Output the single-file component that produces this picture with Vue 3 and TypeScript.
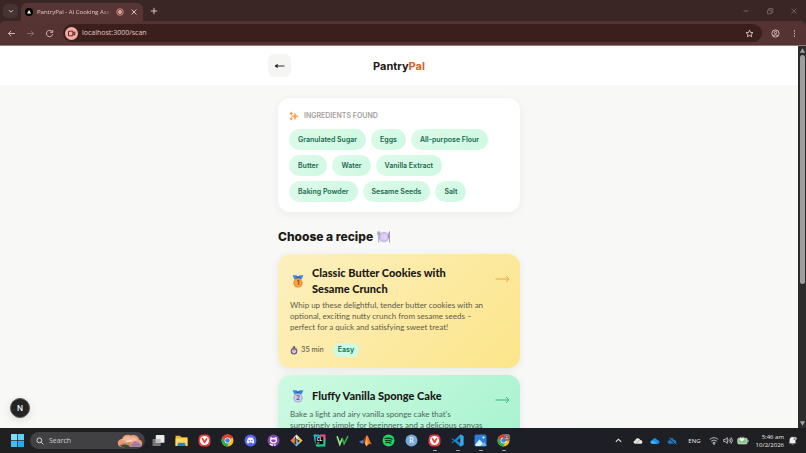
<script setup lang="ts">
import { ref } from 'vue'

interface Recipe {
  place: number
  tone: 'gold' | 'mint'
  title: string[]
  description: string[]
  time?: string
  level?: string
}

interface AppIcon {
  name: string
  art: string
  running?: boolean
}

const address = ref('localhost:3000/scan')
const query = ref('')

const ingredients: string[] = [
  'Granulated Sugar', 'Eggs', 'All-purpose Flour',
  'Butter', 'Water', 'Vanilla Extract',
  'Baking Powder', 'Sesame Seeds', 'Salt',
]

const recipes: Recipe[] = [
  {
    place: 1,
    tone: 'gold',
    title: ['Classic Butter Cookies with', 'Sesame Crunch'],
    description: [
      'Whip up these delightful, tender butter cookies with an',
      'optional, exciting nutty crunch from sesame seeds –',
      'perfect for a quick and satisfying sweet treat!',
    ],
    time: '35 min',
    level: 'Easy',
  },
  {
    place: 2,
    tone: 'mint',
    title: ['Fluffy Vanilla Sponge Cake'],
    description: [
      "Bake a light and airy vanilla sponge cake that's",
      'surprisingly simple for beginners and a delicious canvas',
    ],
  },
]

const chrome =
  '<circle cx="12" cy="12" r="11" fill="#fbc116"/><path d="M12 12 2.5 6.5A11 11 0 0 1 21.5 6.5Z" fill="#e33b2e"/><path d="M2.5 6.5A11 11 0 0 0 11 23L16.5 14.5 12 12Z" fill="#2da94f"/><path d="M12 7H21.8A11 11 0 0 0 2.5 6.5L7.5 14Z" fill="#e33b2e"/><circle cx="12" cy="12" r="5.4" fill="#fff"/><circle cx="12" cy="12" r="4.2" fill="#3e82f1"/>'
const vivaldi =
  '<rect x="1" y="1" width="22" height="22" rx="8" fill="#e8413f"/><circle cx="12" cy="12" r="8.4" fill="#fff"/><path d="M8.2 8.6 12 15.6 15.8 9" fill="none" stroke="#e8413f" stroke-width="3.2" stroke-linecap="round" stroke-linejoin="round"/>'

const apps: AppIcon[] = [
  { name: 'Task view', art: '<rect x="1" y="9" width="15" height="13" rx="1" fill="#777"/><rect x="7" y="2" width="16" height="14" rx="1" fill="#ececec"/><rect x="7" y="9" width="9" height="7" fill="#bdbdbd"/>' },
  { name: 'File Explorer', art: '<path d="M1 3h8l3 3h11v16H1Z" fill="#f0b12d"/><path d="M1 8h22v14H1Z" fill="#ffd75e"/><path d="M6 16h12l2 6H4Z" fill="#1987c9"/>' },
  { name: 'Vivaldi', art: vivaldi },
  { name: 'Chrome', art: chrome },
  { name: 'Discord', art: '<circle cx="12" cy="12" r="11" fill="#5865f2"/><path d="M8 7c2.600-1 5.400-1 8 0 2 3 3 6 2.600 9-1 .8-2 1.200-3 1.500l-1.200-1.700h-4.800l-1.200 1.700c-1-.3-2-.7-3-1.500C5 13 6 10 8 7Z" fill="#fff"/><circle cx="9.500" cy="12.500" r="1.500" fill="#5865f2"/><circle cx="14.500" cy="12.500" r="1.500" fill="#5865f2"/>' },
  { name: 'GitHub Desktop', art: '<circle cx="12" cy="12" r="11" fill="#8442b4"/><path d="M9.500 22v-4M14.500 22v-4M9.500 20c-2.500.5-3-1-4-2" fill="none" stroke="#fff" stroke-width="2"/><path d="M6.500 5.500c1.500 0 2.500.8 3 1.200h5c.5-.4 1.500-1.200 3-1.200.4 1 .5 2 .2 3 2 3 1.300 9-5.700 9s-7.700-6-5.700-9c-.3-1-.2-2 .2-3Z" fill="#fff"/><path d="M9 10h6c2 0 2 5-3 5s-5-5-3-5Z" fill="#8442b4"/>' },
  { name: 'Git Bash', art: '<path d="M12 .8 17.500 6.300 12 12 6.500 6.300Z" fill="#f0e6c8"/><path d="M17.500 6.300 23.200 12 17.500 17.700 12 12Z" fill="#efc94c"/><path d="M6.500 6.300 12 12 6.500 17.700.8 12Z" fill="#ef7a4c"/><path d="M12 12 17.500 17.700 12 23.200 6.500 17.700Z" fill="#76b6df"/><path d="M10 5v12M10 8l6 5" fill="none" stroke="#2a2f3a" stroke-width="1.600"/><circle cx="10" cy="17" r="1.800" fill="#2a2f3a"/><circle cx="16" cy="13" r="1.800" fill="#2a2f3a"/>' },
  { name: 'CLion', art: '<path d="M1 2h13l9 5v7L12 23H6Z" fill="#21d789"/><path d="M1 1h10v11l-7 5Z" fill="#22b8d6"/><path d="M13 1h10v11l-9-3Z" fill="#ef4b8e"/><path d="M12 14h11v9H8Z" fill="#1fc98c"/><rect x="5" y="5" width="14" height="14" fill="#090909"/><text x="7" y="13" font-size="8" font-weight="700" fill="#fff" font-family="Open Sans">CL</text><path d="M7 16.500h5" stroke="#fff" stroke-width="1.300"/>' },
  { name: 'Wondershare', art: '<path d="M2 4 7 19 11.500 8" fill="none" stroke="#9be28a" stroke-width="3"/><path d="M11 7 15 18 22 4" fill="none" stroke="#2fae49" stroke-width="3"/>' },
  { name: 'MATLAB', art: '<path d="M0 14 7 11 10 16 5 18Z" fill="#3f83c6"/><path d="M7 11C10 10 12 4 14.500 2L12 19 10 16Z" fill="#a83220"/><path d="M14.500 2C18 5 20 15 24 20c-4-4-6-1-10 3l-3-5Z" fill="#ec7a24"/><path d="M14.500 2 16 18l-2 5-3-5Z" fill="#f6b15a"/>' },
  { name: 'Spotify', art: '<circle cx="12" cy="12" r="11" fill="#1ed760"/><path d="M5.500 8.500c4.500-1.500 9.500-1 13.300 1.100M6.200 12.300c4-1.200 8-.7 11.300 1.200M7 16c3.300-.9 6.500-.5 9.200 1" fill="none" stroke="#10251a" stroke-width="2" stroke-linecap="round"/>' },
  { name: 'RStudio', art: '<circle cx="12" cy="12" r="11" fill="#75aadb"/><text x="12" y="17" text-anchor="middle" font-size="14" fill="#fff" font-family="Liberation Serif">R</text>' },
  { name: 'Vivaldi window', art: vivaldi, running: true },
  { name: 'Visual Studio Code', art: '<path d="M17 1 6.500 11 2.500 8 1 9l4 3.500L1 16l1.500 1 4-3L17 23l6-2.700V3.700Z" fill="#1e86cf"/><path d="M17 1v22l6-2.700V3.700Z" fill="#35a9ef"/><path d="M17 7.500v9L11 12Z" fill="#1d2230"/>', running: true },
  { name: 'Photos', art: '<rect x="1" y="1" width="22" height="22" rx="3" fill="#2b7fd6"/><path d="M2 20 10 10l11 12H3Z" fill="#d9efff"/><path d="M12 22 18 15l5 5v2Z" fill="#62b9f5"/><circle cx="17.500" cy="6.500" r="2" fill="#fff"/>', running: true },
  { name: 'Chrome window', art: chrome + '<circle cx="18" cy="6" r="6.500" fill="#6d5654"/><circle cx="18" cy="6" r="5" fill="none" stroke="#bfa39f"/><circle cx="18" cy="4.800" r="1.600" fill="#d6bcb8"/><path d="M15 9c1-2.500 5-2.500 6 0" fill="#d6bcb8"/>', running: true },
]
</script>

<template>
  <div class="desktop">
    <header class="browser">
      <div class="tabs">
        <button class="tab-search" aria-label="Search tabs">
          <svg viewBox="0 0 10 10"><path d="M2.500 4 5 6.500 7.500 4" /></svg>
        </button>
        <div class="tab">
          <svg class="favicon" viewBox="0 0 16 16"><circle cx="8" cy="8" r="8" /><path d="M8 4 12 11H4Z" /></svg>
          <span class="tab-title">PantryPal - AI Cooking Assi</span>
          <svg class="recording" viewBox="0 0 16 16"><circle cx="8" cy="8" r="6.500" /><circle class="dot" cx="8" cy="8" r="3.800" /></svg>
          <button class="tab-close" aria-label="Close tab"><svg viewBox="0 0 10 10"><path d="M2 2 8 8M8 2 2 8" /></svg></button>
        </div>
        <button class="new-tab" aria-label="New tab"><svg viewBox="0 0 10 10"><path d="M5 1V9M1 5H9" /></svg></button>
        <div class="window-buttons">
          <button aria-label="Minimize"><svg viewBox="0 0 10 10"><path d="M2 5H8" /></svg></button>
          <button aria-label="Restore"><svg viewBox="0 0 10 10"><path d="M2 4H6.500V8.500H2ZM3.500 4V2H8.500V7H6.500" /></svg></button>
          <button aria-label="Close"><svg viewBox="0 0 10 10"><path d="M2 2 8 8M8 2 2 8" /></svg></button>
        </div>
      </div>
      <div class="toolbar">
        <button aria-label="Back"><svg viewBox="0 0 12 12"><path d="M10.500 6H2M5.500 2.500 2 6 5.500 9.500" /></svg></button>
        <button class="dim" aria-label="Forward"><svg viewBox="0 0 12 12"><path d="M1.500 6H10M6.500 2.500 10 6 6.500 9.500" /></svg></button>
        <button aria-label="Reload"><svg viewBox="0 0 12 12"><path d="M9.500 3.600A4.200 4.200 0 1 0 10.200 7M10.300 1.500V4.500H7.200" /></svg></button>
        <div class="address">
          <svg class="camera" viewBox="0 0 16 16"><circle cx="8" cy="8" r="8" /><path d="M4.300 5.200H9.700V10.800H4.300ZM9.700 7.500 12 6V10L9.700 8.500" /></svg>
          <input v-model="address" aria-label="Address" type="text" />
          <button aria-label="Bookmark"><svg viewBox="0 0 12 12"><path d="M6 1.500 7.300 4.600 10.700 4.900 8.100 7.100 8.900 10.400 6 8.600 3.100 10.400 3.900 7.100 1.300 4.900 4.700 4.600Z" /></svg></button>
        </div>
        <button class="profile" aria-label="Profile"><svg viewBox="0 0 12 12"><circle cx="6" cy="6" r="4.800" /><circle cx="6" cy="4.700" r="1.600" /><path d="M2.800 9.300C4 7.300 8 7.300 9.200 9.300" /></svg></button>
        <button class="menu" aria-label="Menu"><svg viewBox="0 0 12 12"><path d="M6 1.500V3.500M6 5V7M6 8.500V10.500" /></svg></button>
      </div>
    </header>

    <div class="viewport">
      <div class="page">
        <div class="app-bar">
          <div class="app-bar-inner">
            <button class="back" aria-label="Go back"><svg viewBox="0 0 12 8"><path d="M11.500 4H2" /><path class="head" d="M4 1.500V6.500L.5 4Z" /></svg></button>
            <div class="brand">Pantry<span>Pal</span></div>
          </div>
        </div>

        <main>
          <section class="found">
            <h3>
              <svg viewBox="0 0 16 16">
                <path fill="#f9a94e" d="M9.500 2 11.300 6.700 16 8.500 11.300 10.300 9.500 15 7.700 10.300 3 8.500 7.700 6.700Z" />
                <path fill="#f28a45" d="M3.500.5 4.500 3 7 4 4.500 5 3.500 7.500 2.500 5 0 4 2.500 3ZM3.500 9.500 4.400 11.600 6.500 12.500 4.400 13.400 3.500 15.500 2.600 13.400.5 12.500 2.600 11.600Z" />
              </svg>
              Ingredients found
            </h3>
            <ul>
              <li v-for="item in ingredients" :key="item">{{ item }}</li>
            </ul>
          </section>

          <h2>
            Choose a recipe
            <svg viewBox="0 0 28 24">
              <circle cx="14" cy="12" r="10.500" fill="#cdb9ea" /><circle cx="14" cy="12" r="6.500" fill="#decff4" />
              <path d="M3.500 10V23M1.500 1V7.500Q3.500 11 5.500 7.500V1M3.500 1V8M25 23V1Q22.500 4 23 13H25" fill="none" stroke="#9384aa" stroke-width="1.600" />
            </svg>
          </h2>

          <a v-for="recipe in recipes" :key="recipe.place" href="#" class="recipe" :class="recipe.tone">
            <div class="recipe-body">
              <div class="recipe-head">
                <svg class="medal" viewBox="0 0 16 18">
                  <path d="M1 1.500H6L8 4 10 1.500H15L12.500 7H3.500Z" fill="#3f86e8" /><path d="M6 3H10V7H6Z" fill="#2463bd" />
                  <circle cx="8" cy="11.500" r="6" class="medal-rim" /><circle cx="8" cy="11.500" r="4.600" class="medal-face" />
                  <text x="8" y="14.200" text-anchor="middle">{{ recipe.place }}</text>
                </svg>
                <h4><template v-for="(line, i) in recipe.title" :key="line"><br v-if="i" />{{ line }}</template></h4>
              </div>
              <p><template v-for="(line, i) in recipe.description" :key="line"><br v-if="i" />{{ line }}</template></p>
              <div v-if="recipe.time" class="meta">
                <svg viewBox="0 0 14 16">
                  <path d="M5.500 1H8.500V3.500H5.500ZM11 3 12.500 4.500" fill="#66517a" stroke="#66517a" />
                  <circle cx="7" cy="9.500" r="5.800" fill="#66517a" /><circle cx="7" cy="9.500" r="3.800" fill="#dccdea" /><path d="M7 9.500V6.800" stroke="#d3425b" stroke-width="1.400" />
                </svg>
                <span>{{ recipe.time }}</span>
                <span class="level">{{ recipe.level }}</span>
              </div>
            </div>
            <svg class="arrow" viewBox="0 0 15 8"><path d="M.500 4H14M11 1 14 4 11 7" /></svg>
          </a>
        </main>
        <button class="dev-badge" aria-label="Developer tools">N</button>
      </div>
      <div class="scrollbar">
        <svg viewBox="0 0 8 8"><path d="M4 1.500 7 6.500H1Z" /></svg>
        <div class="track"><div class="thumb"></div></div>
        <svg viewBox="0 0 8 8"><path d="M1 1.500H7L4 6.500Z" /></svg>
      </div>
    </div>

    <footer class="taskbar">
      <button class="start" aria-label="Start"><svg viewBox="0 0 12 12"><path fill="#7be0fb" d="M0 0H5.700V5.700H0Z" /><path fill="#5bd0f8" d="M6.300 0H12V5.700H6.300Z" /><path fill="#43bdf3" d="M0 6.300H5.700V12H0Z" /><path fill="#2aa8ee" d="M6.300 6.300H12V12H6.300Z" /></svg></button>
      <label class="search">
        <svg class="lens" viewBox="0 0 10 10"><circle cx="4.200" cy="4.200" r="3" /><path d="M6.500 6.500 9.200 9.200" /></svg>
        <input v-model="query" type="text" placeholder="Search" aria-label="Search" />
        <svg class="highlight" viewBox="0 0 26 14">
          <path d="M1 10C0 7 3 5 5 5 6 1 11 0 14 1.500 18 0 22 3 22 5.500 26 6 26 12 23 13H8C4 14 1 12 1 10Z" fill="#e89a7b" />
          <path d="M5 6C8 1 13 2 14 4 18 2 21 5 20 7L12 8Z" fill="#f3b79b" />
          <path d="M2 11C5 8 9 10 12 8 15 11 19 8 24 10L22 13H6Z" fill="#c88b6e" />
          <path d="M15 13C15 9 18 6 20 8L25 12Z" fill="#9a7bb4" /><path d="M3 12C6 10 11 10 13 13H6Z" fill="#3c4a36" />
          <path d="M9 7.500 15 6.500" stroke="#fff1c9" />
        </svg>
      </label>
      <nav class="apps">
        <button v-for="app in apps" :key="app.name" :aria-label="app.name" :class="{ running: app.running }">
          <svg viewBox="0 0 24 24" v-html="app.art"></svg>
        </button>
      </nav>
      <div class="tray">
        <button class="chevron" aria-label="Hidden icons"><svg viewBox="0 0 10 10"><path d="M2 6.500 5 3.500 8 6.500" /></svg></button>
        <svg class="cloud" viewBox="0 0 18 14"><path d="M5 12C0 12 0 6 4 6 5 1 11 1 13 5 18 5 18 12 14 12Z" fill="#e4e6e4" /><path d="M5 12 12 5" stroke="#8d9690" stroke-width="1.500" /></svg>
        <svg class="cloud" viewBox="0 0 18 14"><path d="M5 12C0 12 0 6 4 6 5 1 11 1 13 5 18 5 18 12 14 12Z" fill="#1590e8" /><path d="M4 6C6 6 9 8 14 12H5C0 12 0 6 4 6Z" fill="#39b2fa" /></svg>
        <svg class="cloud" viewBox="0 0 18 14"><path d="M5 12C0 12 0 6 4 6 5 1 11 1 13 5 18 5 18 12 14 12Z" fill="#1779c5" /><path d="M3 1 16 13" stroke="#1e2025" stroke-width="2.400" /><path d="M4 1 17 13" stroke="#55bdf5" stroke-width="1.100" /></svg>
        <span class="lang">ENG</span>
        <svg class="status" viewBox="0 0 14 12"><path d="M1 4.500Q7-.5 13 4.500M3 7Q7 3.500 11 7M5 9.200Q7 7.500 9 9.200" /><circle cx="7" cy="10.500" r="1" /></svg>
        <svg class="status" viewBox="0 0 14 12"><path d="M1 4.500H3L6 2V10L3 7.500H1ZM8 4.500Q9.500 6 8 7.500M9.700 3Q12 6 9.700 9M11.300 1.500Q15 6 11.300 10.500" /></svg>
        <svg class="battery" viewBox="0 0 16 12"><rect x="1" y="3" width="12.500" height="7.500" rx="1.500" fill="#8cc58a" stroke="#d7e7d5" /><path d="M14.800 5.500V8" stroke="#d7e7d5" /><path d="M5 3V1M8 3V1M4 3.500H9V5Q6.500 8 4 5Z" fill="#fff" stroke="#e8f3e6" /></svg>
        <div class="clock"><span>5:46 am</span><span>10/2/2026</span></div>
        <svg class="bell" viewBox="0 0 14 14"><path d="M3 10V5Q4 1 8 2T11 7V10L12 11H2ZM5.500 12.500H8.500" fill="#f0f0f0" stroke="#f0f0f0" /><circle cx="10.500" cy="4" r="3" fill="#dcdcdc" /><path d="M9.300 3H11.500L9.500 5.300H11.700" fill="none" stroke="#333" stroke-width=".8" /></svg>
      </div>
    </footer>
  </div>
</template>

<style>
body {
  margin: 0;
  overflow: hidden;
}
</style>

<style scoped>
.desktop {
  --ui: "Open Sans", sans-serif;
  --app: Inter, sans-serif;
  --recipe: Lato, sans-serif;
  display: grid;
  grid-template-rows: auto minmax(0, 1fr) auto;
  height: 100vh;
  font-family: var(--ui);
}
.desktop * { box-sizing: border-box; }
svg { display: block; flex: none; }
button {
  display: grid;
  place-items: center;
  flex: none;
  margin: 0;
  padding: 0;
  border: 0;
  background: none;
  color: inherit;
  font: inherit;
}
input {
  min-width: 0;
  padding: 0;
  border: 0;
  outline: 0;
  background: none;
  font: inherit;
}

/* Browser frame */
.browser { color: #e3c4c0; background: #3a2625; border-bottom: 1px solid #937977; }
.browser button svg { width: 8px; height: 8px; fill: none; stroke: currentColor; stroke-width: 1.2; }
.tabs { display: flex; align-items: center; height: 21px; padding-left: 3px; }
.tab-search { width: 15px; height: 14px; border-radius: 5px; background: #463433; }
.tab {
  display: flex;
  align-items: center;
  align-self: end;
  gap: 4px;
  width: 122px;
  height: 18px;
  margin-left: 3px;
  padding: 0 3px 0 4px;
  border-radius: 6px 6px 0 0;
  background: #573534;
}
.favicon { width: 8px; height: 8px; }
.favicon path { fill: #fff; }
.tab-title {
  flex: 1;
  font-size: 6px;
  line-height: 12px;
  white-space: nowrap;
  mask-image: linear-gradient(90deg, #000 86%, transparent);
}
.recording { width: 8px; height: 8px; fill: none; stroke: #f0aaa5; stroke-width: 1.5; }
.recording .dot { fill: #f0aaa5; stroke: none; }
.tab-close { width: 12px; height: 12px; }
.new-tab { width: 14px; height: 14px; margin-left: 4px; }
.window-buttons { display: flex; margin-left: auto; color: #7a6462; }
.window-buttons button { width: 24px; height: 20px; }
.toolbar {
  display: flex;
  align-items: center;
  height: 24px;
  padding: 0 2px;
  background: #543332;
  border-radius: 5px 5px 0 0;
}
.toolbar button { width: 19px; height: 18px; }
.toolbar button svg { width: 9px; height: 9px; }
.toolbar .dim { color: #96736f; }
.toolbar .profile { margin-left: 4px; }
.address {
  display: flex;
  flex: 1;
  align-items: center;
  height: 18px;
  margin-left: 4px;
  padding: 0 3px 0 2px;
  border-radius: 9px;
  background: #3a1f1d;
}
.address input { flex: 1; margin-left: 4px; color: #e4c8c4; font-size: 7px; line-height: 12px; }
.camera { width: 13px; height: 13px; fill: #f6aaa4; }
.camera path { fill: none; stroke: #5b2522; stroke-width: 1.2; }

/* Page */
.viewport { display: flex; min-height: 0; background: #f8f8f6; }
.page { position: relative; flex: 1; overflow: hidden; font-family: var(--app); color: #1c1917; }
.app-bar { background: #fff; }
.app-bar-inner {
  display: grid;
  grid-template-columns: 23px 1fr 23px;
  align-items: center;
  max-width: 262px;
  height: 39px;
  margin: 0 auto;
}
.back { width: 23px; height: 23px; border-radius: 6px; background: #f5f5f4; }
.back svg { width: 11px; height: 8px; fill: none; stroke: #26221f; }
.back .head { fill: #26221f; stroke: none; }
.brand { font-size: 11px; font-weight: 700; line-height: 16px; text-align: center; }
.brand span { color: #ee5a1b; }
main { max-width: 242px; margin: 0 auto; padding-top: 13px; }
.found {
  padding: 12px 11px 10px;
  border-radius: 12px;
  background: #fff;
  box-shadow: 0 2px 9px rgba(40, 35, 30, 0.06);
}
h3, h2, h4, p, ul { margin: 0; padding: 0; }
h3 {
  display: flex;
  align-items: center;
  gap: 5px;
  margin-bottom: 7px;
  color: #a5a09c;
  font-size: 7px;
  font-weight: 600;
  line-height: 12px;
  text-transform: uppercase;
}
h3 svg { width: 10px; height: 10px; }
ul { display: flex; flex-wrap: wrap; gap: 5px; padding-right: 12px; list-style: none; }
li {
  padding: 0 9px;
  border-radius: 11px;
  background: linear-gradient(135deg, #dcfbe9, #cff8e2);
  color: #17694f;
  font-size: 7px;
  font-weight: 600;
  line-height: 21px;
}
h2 {
  display: flex;
  align-items: center;
  gap: 4px;
  margin: 16px 0 8px;
  font-size: 12px;
  font-weight: 800;
  line-height: 18px;
}
h2 svg { width: 14px; height: 12px; }
.recipe {
  display: flex;
  justify-content: space-between;
  margin-bottom: 7px;
  padding: 11px 10px 11px 12px;
  border-radius: 12px;
  color: inherit;
  text-decoration: none;
  box-shadow: 0 2px 9px rgba(40, 35, 30, 0.08);
}
.gold { background: linear-gradient(135deg, #fdf0bf, #fce58a); --accent: #eda63d; --rim: #e98a2e; --face: #f7a53f; --digit: #8b4b19; }
.mint { background: linear-gradient(135deg, #cefae2, #a8f3d0); --accent: #2fb987; --rim: #a9a5cf; --face: #d0cce9; --digit: #64608f; }
.recipe-head { display: flex; align-items: center; gap: 6px; min-height: 20px; margin-bottom: 3px; }
.medal { width: 16px; height: 14px; }
.medal-rim { fill: var(--rim); }
.medal-face { fill: var(--face); }
.medal text { fill: var(--digit); font-size: 8px; font-weight: 700; }
h4 { font-family: var(--recipe); font-size: 11px; font-weight: 900; line-height: 16px; white-space: nowrap; }
p { color: #5f5a49; font-family: var(--recipe); font-size: 8px; line-height: 11px; white-space: nowrap; }
.mint p { color: #4c6459; }
.meta { display: flex; align-items: center; gap: 3px; margin-top: 10px; color: #6e6751; font-size: 7px; font-weight: 500; line-height: 14px; }
.meta svg { width: 8px; height: 9px; }
.level { margin-left: 6px; padding: 0 5px; border-radius: 7px; background: #cffae3; color: #12805c; font-weight: 700; }
.arrow { width: 15px; height: 8px; margin-top: 10px; fill: none; stroke: var(--accent); stroke-width: 1; }
.dev-badge {
  position: absolute;
  bottom: 10px;
  left: 10px;
  width: 20px;
  height: 20px;
  border: 1px solid #555;
  border-radius: 50%;
  background: #242424;
  color: #fff;
  font-size: 8px;
  font-weight: 500;
  box-shadow: 0 2px 8px rgba(0, 0, 0, 0.12);
}
.scrollbar { display: flex; flex-direction: column; align-items: center; width: 8px; padding: 1px 0; background: #2c2c2c; }
.scrollbar svg { width: 7px; height: 7px; fill: #a3a3a3; }
.track { flex: 1; width: 5px; padding: 1px 0; }
.thumb { height: 63%; border-radius: 3px; background: #9e9e9e; }

/* Taskbar */
.taskbar { display: flex; align-items: center; height: 25px; padding: 0 9px 0 8px; background: linear-gradient(90deg, #202021, #1c1e29 50%, #202022); color: #ececec; }
.start { width: 18px; height: 23px; }
.start svg { width: 13px; height: 13px; }
.search {
  display: flex;
  align-items: center;
  width: 115px;
  height: 17px;
  margin-left: 4px;
  padding: 0 2px 0 6px;
  border-radius: 9px;
  background: #414042;
}
.search input { flex: 1; margin-left: 5px; color: #ddd; font-size: 7px; }
.search input::placeholder { color: #d2d2d2; opacity: 1; }
.lens { width: 8px; height: 8px; fill: none; stroke: #ddd; stroke-width: 1.2; }
.highlight { width: 26px; height: 14px; }
.apps { display: flex; margin-left: 2px; }
.apps button { position: relative; width: 23px; height: 23px; }
.apps svg { width: 13px; height: 13px; }
.running::after {
  position: absolute;
  bottom: 1px;
  left: 10px;
  width: 4px;
  height: 1px;
  border-radius: 1px;
  background: #a8a8ad;
  content: "";
}
.tray { display: flex; align-items: center; gap: 4px; margin-left: auto; font-size: 6px; }
.chevron svg { width: 9px; height: 9px; fill: none; stroke: #e8e8e8; stroke-width: 1.2; }
.tray .chevron { margin-right: 6px; }
.cloud { width: 10px; height: 8px; margin-right: 3px; }
.lang { margin: 0 4px; }
.status { width: 10px; height: 9px; fill: none; stroke: #dedede; stroke-width: 1.1; }
.battery { width: 12px; height: 9px; fill: none; }
.clock { display: grid; margin-left: 3px; line-height: 8px; text-align: right; }
.bell { width: 9px; height: 9px; }
</style>
